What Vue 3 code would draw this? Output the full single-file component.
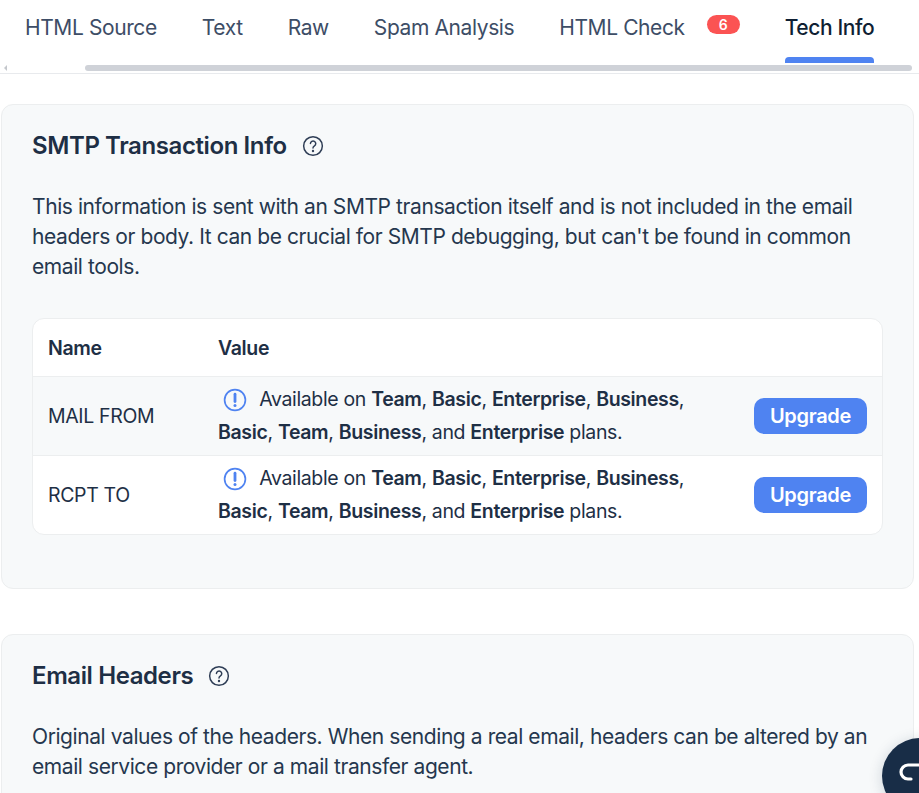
<script setup>
const tabs = [
  { name: 'HTML Source' },
  { name: 'Text' },
  { name: 'Raw' },
  { name: 'Spam Analysis' },
  { name: 'HTML Check', badge: 6 },
  { name: 'Tech Info', active: true }
]

const rows = ['MAIL FROM', 'RCPT TO']
</script>

<template>
  <div class="page">
    <nav class="tabs">
      <div class="tab-row">
        <a v-for="tab in tabs" :key="tab.name" class="tab" :class="{ active: tab.active }">
          {{ tab.name }}
          <span v-if="tab.badge" class="badge">{{ tab.badge }}</span>
        </a>
      </div>
      <div class="scrollbar">
        <span class="arrow"></span>
        <span class="thumb"></span>
      </div>
    </nav>

    <section class="card first">
      <h2>
        SMTP Transaction Info
        <svg class="help" viewBox="0 0 24 24" fill="none" stroke="currentColor" stroke-width="1.6" stroke-linecap="round">
          <circle cx="12" cy="12" r="10.2" />
          <path d="M9.2 9.4a2.9 2.9 0 1 1 4.4 2.5c-1 .6-1.6 1.2-1.6 2.3" />
          <circle cx="12" cy="17.4" r=".5" fill="currentColor" />
        </svg>
      </h2>
      <p class="desc">
        This information is sent with an SMTP transaction itself and is not included in the email
        headers or body. It can be crucial for SMTP debugging, but can't be found in common
        email tools.
      </p>

      <div class="table">
        <div class="row head">
          <div class="col-name">Name</div>
          <div class="col-value">Value</div>
        </div>
        <div v-for="row in rows" :key="row" class="row">
          <div class="col-name">{{ row }}</div>
          <div class="col-value plans">
            <svg class="info" viewBox="0 0 24 24" fill="none" stroke="currentColor" stroke-width="1.7" stroke-linecap="round">
              <circle cx="12" cy="12" r="10.4" />
              <path d="M12 6.2v7.4" stroke-width="2.8" />
              <circle cx="12" cy="17.6" r="1.5" fill="currentColor" stroke="none" />
            </svg>
            Available on <b>Team</b>, <b>Basic</b>, <b>Enterprise</b>, <b>Business</b>,<br />
            <b>Basic</b>, <b>Team</b>, <b>Business</b>, and <b>Enterprise</b> plans.
          </div>
          <button type="button" class="upgrade">Upgrade</button>
        </div>
      </div>
    </section>

    <section class="card">
      <h2>
        Email Headers
        <svg class="help" viewBox="0 0 24 24" fill="none" stroke="currentColor" stroke-width="1.6" stroke-linecap="round">
          <circle cx="12" cy="12" r="10.2" />
          <path d="M9.2 9.4a2.9 2.9 0 1 1 4.4 2.5c-1 .6-1.6 1.2-1.6 2.3" />
          <circle cx="12" cy="17.4" r=".5" fill="currentColor" />
        </svg>
      </h2>
      <p class="desc">
        Original values of the headers. When sending a real email, headers can be altered by an
        email service provider or a mail transfer agent.
      </p>
    </section>

    <div class="chat">
      <svg viewBox="0 0 40 40" fill="none" stroke="#fff" stroke-width="3.2" stroke-linecap="round">
        <path d="M24 9H12a7 7 0 0 0-7 7v0a7 7 0 0 0 7 7h3" />
      </svg>
    </div>
  </div>
</template>

<style>
html, body {
  margin: 0;
  background: #fff;
}
</style>

<style scoped>
.page {
  position: relative;
  height: 793px;
  overflow: hidden;
  font-family: Inter, "Liberation Sans", sans-serif;
  color: #1e2f45;
}

.tabs {
  height: 73px;
  border-bottom: 1px solid #e8eaed;
}

.tab-row {
  display: flex;
  height: 65px;
  padding-left: 2.5px;
  box-sizing: border-box;
}

.tab {
  position: relative;
  display: flex;
  align-items: flex-start;
  padding: 14px 22.5px 0;
  font-size: 21px;
  letter-spacing: -0.4px;
  line-height: 28px;
  color: #3d4d66;
  white-space: nowrap;
}

.tab.active {
  color: #0f1f33;
  font-weight: 500;
}

.tab.active::after {
  content: '';
  position: absolute;
  left: 22.5px;
  right: 22.5px;
  top: 57px;
  height: 6px;
  background: #4f83f1;
  border-radius: 4px 4px 0 0;
}

.badge {
  margin: 1px 0 0 22px;
  width: 33px;
  height: 19px;
  border-radius: 10px;
  background: #fb5353;
  color: #fff;
  font-size: 14px;
  letter-spacing: 0;
  font-weight: 600;
  line-height: 19px;
  text-align: center;
}

.scrollbar {
  display: flex;
  align-items: center;
  height: 6px;
}

.arrow {
  width: 0;
  height: 0;
  margin-left: 4px;
  border-style: solid;
  border-width: 3px 3px 3px 0;
  border-color: transparent #c4c7cc transparent transparent;
}

.thumb {
  width: 827px;
  height: 6px;
  margin-left: 78px;
  border-radius: 3px;
  background: #cfd2d8;
}

.card {
  width: 913px;
  margin: 0 0 45px 1px;
  padding: 24px 30px 53px;
  box-sizing: border-box;
  background: #f7f9fa;
  border: 1px solid #eceeef;
  border-radius: 12px;
}

.first {
  margin-top: 30px;
}

h2 {
  display: flex;
  align-items: center;
  gap: 15px;
  margin: 0;
  font-size: 24px;
  letter-spacing: -0.4px;
  font-weight: 600;
  line-height: 33px;
  color: #1e2f45;
}

.help {
  width: 22px;
  height: 22px;
  color: #2e3d55;
}

.desc {
  margin: 30px 0 0;
  font-size: 21px;
  letter-spacing: -0.42px;
  line-height: 30px;
  color: #25374e;
}

.table {
  margin-top: 36px;
  background: #fff;
  border: 1px solid #eceeef;
  border-radius: 12px;
  overflow: hidden;
  font-size: 19.5px;
  letter-spacing: -0.35px;
}

.row {
  display: flex;
  align-items: center;
  height: 78px;
  padding: 0 15px;
  border-top: 1px solid #eceeef;
}

.row:nth-child(2) {
  background: #f7f9fa;
}

.row.head {
  height: 57px;
  border-top: 0;
  font-weight: 600;
}

.col-name {
  width: 170px;
  flex-shrink: 0;
}

.col-value {
  flex: 1;
}

.plans {
  line-height: 33px;
}

.plans b {
  font-weight: 600;
}

.info {
  width: 24px;
  height: 24px;
  margin: 0 7px 0 5px;
  vertical-align: -6px;
  color: #4f83f1;
}

.upgrade {
  width: 113px;
  height: 36px;
  padding: 0;
  border: 0;
  border-radius: 10px;
  background: #4f83f1;
  color: #fff;
  font-family: inherit;
  font-size: 20px;
  letter-spacing: -0.3px;
  font-weight: 600;
}

.chat {
  position: absolute;
  left: 882px;
  top: 738px;
  width: 76px;
  height: 76px;
  border-radius: 50%;
  background: #182d47;
  box-shadow: 0 2px 14px rgba(24, 45, 71, 0.18);
}

.chat svg {
  position: absolute;
  left: 14px;
  top: 18px;
  width: 40px;
  height: 40px;
}
</style>
